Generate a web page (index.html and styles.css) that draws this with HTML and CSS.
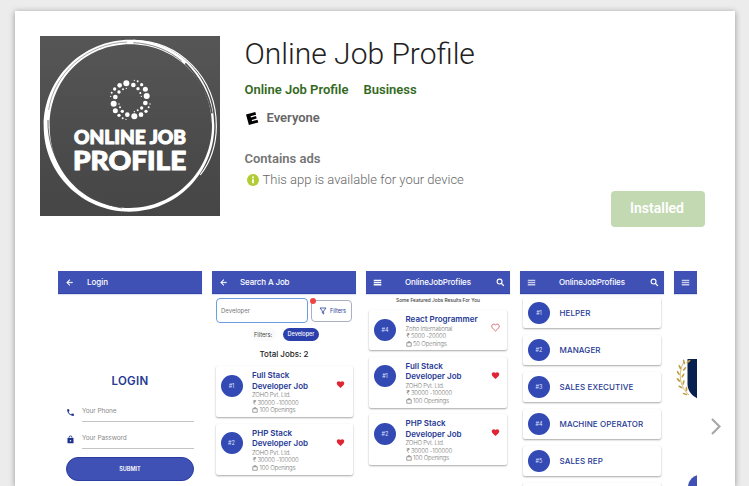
FILE: index.html
```html
<!DOCTYPE html>
<html lang="en">
<head>
<meta charset="utf-8">
<title>Online Job Profile</title>
<link rel="stylesheet" href="styles.css">
</head>
<body>
<svg class="defs" aria-hidden="true">
  <symbol id="back" viewBox="0 0 24 24"><path d="M20 11H7.8l5.6-5.6L12 4l-8 8 8 8 1.4-1.4L7.8 13H20z" stroke="#fff" stroke-width="1"/></symbol>
  <symbol id="menu" viewBox="0 0 24 24"><path d="M2 4.500h20v3.700H2zM2 10.200h20v3.700H2zM2 16h20v3.700H2z"/></symbol>
  <symbol id="search" viewBox="0 0 24 24"><circle cx="9.500" cy="9.500" r="6.500" fill="none" stroke="currentColor" stroke-width="3"/><path d="M14 14l7 7" stroke="currentColor" stroke-width="3.500"/></symbol>
  <symbol id="heart" viewBox="0 0 24 24"><path d="M12 21.350l-1.450-1.320C5.400 15.360 2 12.280 2 8.500 2 5.420 4.420 3 7.500 3c1.740 0 3.410.81 4.500 2.090C13.090 3.810 14.760 3 16.500 3 19.580 3 22 5.420 22 8.500c0 3.780-3.400 6.860-8.550 11.540z"/></symbol>
  <symbol id="bag" viewBox="0 0 24 24"><path d="M3 7h18v14H3zM8 7V3h8v4" fill="none" stroke="currentColor" stroke-width="2.400"/></symbol>
</svg>
<main class="page">
  <header class="app">
    <svg class="logo" viewBox="120 108 540 540">
      <defs><linearGradient id="bg" x1="0" y1="0" x2="0" y2="1"><stop offset="0" stop-color="#565656"/><stop offset=".6" stop-color="#4b4b4b"/><stop offset="1" stop-color="#464646"/></linearGradient></defs>
      <rect x="120" y="108" width="540" height="540" fill="url(#bg)"/>
      <path fill="#fff" fill-rule="evenodd" d="M391 119C248 119 131 234 131 378S247 635 388 635C530 635 643 520 643 376S534 119 391 119M390 133C527 133 636 240 636 376S526 624 389 624 149 515 149 378 253 133 390 133"/>
      <path d="M400 121C540 122 649 235 649 378c0 60-18 108-48 147" fill="none" stroke="#fff" stroke-width="3.500"/>
      <g fill="none" stroke="#4e4e4e"><path d="M144 360c-4 120 82 240 222 264" stroke-width="2.500"/><path d="M146 330c16-110 115-200 235-204" stroke-width="1.500"/><path d="M400 128c60 3 105 23 145 55" stroke-width="2"/><path d="M556 190c44 44 70 90 80 150" stroke-width="5"/></g>
      <g fill="#fff">
        <circle cx="379" cy="250" r="9"/><circle cx="359" cy="256" r="7"/><circle cx="344" cy="267" r="5"/><circle cx="335" cy="278" r="3"/><circle cx="332" cy="289" r="2"/>
        <circle cx="379" cy="265" r="2"/><circle cx="369" cy="268" r="3"/><circle cx="357" cy="276" r="5"/><circle cx="346" cy="291" r="7"/><circle cx="341" cy="311" r="9"/>
        <circle cx="346" cy="332" r="7.500"/><circle cx="357" cy="346" r="5"/><circle cx="368" cy="355" r="3"/><circle cx="378" cy="358" r="2"/><circle cx="357" cy="312" r="2"/><circle cx="360" cy="322" r="3"/><circle cx="367" cy="334" r="5"/><circle cx="382" cy="344" r="7"/><circle cx="403" cy="349" r="9"/><circle cx="423" cy="344" r="7"/><circle cx="438" cy="334" r="5"/><circle cx="446" cy="322" r="3"/><circle cx="450" cy="312" r="2"/>
        <circle cx="403" cy="335" r="2"/><circle cx="413" cy="331" r="3"/><circle cx="425" cy="324" r="5"/><circle cx="436" cy="309" r="7"/><circle cx="440" cy="288" r="9"/><circle cx="436" cy="268" r="7.500"/><circle cx="425" cy="254" r="5"/><circle cx="413" cy="244" r="3"/><circle cx="403" cy="241" r="2"/><circle cx="400" cy="255" r="7"/><circle cx="414" cy="266" r="5"/><circle cx="421" cy="279" r="3"/><circle cx="424" cy="289" r="2"/>
      </g>
      <g class="logo-text"><text x="222" y="433" font-size="54" textLength="336" lengthAdjust="spacingAndGlyphs">ONLINE JOB</text><text x="219" y="510" font-size="78" textLength="340" lengthAdjust="spacingAndGlyphs">PROFILE</text></g>
    </svg>
    <div class="info">
      <h1>Online Job Profile</h1>
      <div class="links"><a>Online Job Profile</a><a>Business</a></div>
      <div class="rating"><svg viewBox="0 0 14 16"><path d="M1 4.600L10.300 2l.8 2.700-5.500 1.500.4 1.300 5-1.400.7 2.400-5 1.400.4 1.300 5.400-1.500.8 2.700L3.900 15z"/></svg><span>Everyone</span></div>
      <div class="ads">Contains ads</div>
      <div class="device"><svg viewBox="0 0 12 12"><circle cx="6" cy="6" r="6" fill="#b2cc35"/><path d="M5.100 2.600h1.800v1.700H5.100zM5.100 5.300h1.800v4H5.100z" fill="#fff"/></svg><span>This app is available for your device</span></div>
    </div>
    <button class="installed">Installed</button>
  </header>

  <section class="gallery">
    <div class="strip">
      <article class="phone">
        <div class="bar"><svg><use href="#back"/></svg><b class="login-title">Login</b></div>
        <div class="login">
          <h2>LOGIN</h2>
          <label><svg viewBox="0 0 24 24"><path d="M6.620 10.790c1.440 2.830 3.760 5.140 6.590 6.590l2.200-2.200c.27-.27.67-.36 1.020-.24 1.120.37 2.330.57 3.570.57.55 0 1 .45 1 1V20c0 .55-.45 1-1 1C10.610 21 3 13.390 3 4c0-.55.45-1 1-1h3.500c.55 0 1 .45 1 1 0 1.250.2 2.450.57 3.570.11.35.03.74-.25 1.020z"/></svg><span>Your Phone</span></label>
          <label><svg viewBox="0 0 24 24"><path fill-rule="evenodd" d="M18 8h-1V6A5 5 0 0 0 7 6v2H4v14h16V8zM9 8V6a3 3 0 0 1 6 0v2zm3 5a2 2 0 1 1 0 4 2 2 0 0 1 0-4"/></svg><span>Your Password</span></label>
          <div class="submit">SUBMIT</div>
        </div>
      </article>

      <article class="phone">
        <div class="bar"><svg><use href="#back"/></svg><b class="search-title">Search A Job</b></div>
        <div class="find">
          <div class="query">Developer</div>
          <div class="filter"><i></i><svg viewBox="0 0 24 24"><path d="M3 3h18l-7 9v9l-4-3v-6z" fill="none" stroke="#33449f" stroke-width="2.500"/></svg>Filters</div>
        </div>
        <div class="chips"><span>Filters:</span><b>Developer</b></div>
        <div class="total">Total Jobs: 2</div>
        <div class="jobs">
          <div class="job"><i>#1</i><div><h3>Full Stack<br>Developer Job</h3><p>ZOHO Pvt. Ltd.</p><p class="pay">₹ 30000 -100000</p><p><svg><use href="#bag"/></svg>100 Openings</p></div><svg class="like"><use href="#heart"/></svg></div>
          <div class="job"><i>#2</i><div><h3>PHP Stack<br>Developer Job</h3><p>ZOHO Pvt. Ltd.</p><p class="pay">₹ 30000 -100000</p><p><svg><use href="#bag"/></svg>100 Openings</p></div><svg class="like"><use href="#heart"/></svg></div>
        </div>
      </article>

      <article class="phone">
        <div class="bar"><svg><use href="#menu"/></svg><b class="home-title">OnlineJobProfiles</b><svg class="end"><use href="#search"/></svg></div>
        <div class="featured">Some Featured Jobs Results For You</div>
        <div class="jobs home">
          <div class="job short"><i>#4</i><div><h3 class="react">React Programmer</h3><p>Zoho International</p><p class="pay">₹ 5000 -20000</p><p><svg><use href="#bag"/></svg>50 Openings</p></div><svg class="like outline"><use href="#heart"/></svg></div>
          <div class="job"><i>#1</i><div><h3>Full Stack<br>Developer Job</h3><p>ZOHO Pvt. Ltd.</p><p class="pay">₹ 30000 -100000</p><p><svg><use href="#bag"/></svg>100 Openings</p></div><svg class="like"><use href="#heart"/></svg></div>
          <div class="job"><i>#2</i><div><h3>PHP Stack<br>Developer Job</h3><p>ZOHO Pvt. Ltd.</p><p class="pay">₹ 30000 -100000</p><p><svg><use href="#bag"/></svg>100 Openings</p></div><svg class="like"><use href="#heart"/></svg></div>
        </div>
      </article>

      <article class="phone">
        <div class="bar"><svg class="dim"><use href="#menu"/></svg><b class="home-title">OnlineJobProfiles</b><svg class="end"><use href="#search"/></svg></div>
        <div class="roles">
          <div><i>#1</i><b>HELPER</b></div>
          <div><i>#2</i><b>MANAGER</b></div>
          <div><i>#3</i><b>SALES EXECUTIVE</b></div>
          <div><i>#4</i><b>MACHINE OPERATOR</b></div>
          <div><i>#5</i><b>SALES REP</b></div>
          <div></div>
        </div>
      </article>

      <article class="phone">
        <div class="bar"><svg class="dim"><use href="#menu"/></svg></div>
        <svg class="crest" viewBox="0 0 24 42">
          <path d="M12.500 1H24v40C16 38 12 32 12.500 24z" fill="#08204f"/><path d="M24 20v9c-2-2-2-6 0-9" fill="#03102e"/>
          <path d="M9 4C3 14 4 28 14 37" fill="none" stroke="#c0a044" stroke-width=".7"/>
          <g fill="#c0a044"><ellipse cx="9" cy="4" rx=".9" ry="2.500" transform="rotate(-18 9 4)"/><ellipse cx="13.500" cy="3.500" rx=".9" ry="2.500" transform="rotate(50 13.500 3.500)"/><ellipse cx="4.800" cy="9" rx=".9" ry="2.500" transform="rotate(-25 4.800 9)"/><ellipse cx="9.500" cy="11" rx=".9" ry="2.500" transform="rotate(40 9.500 11)"/><ellipse cx="3.300" cy="15" rx=".9" ry="2.500" transform="rotate(-30 3.300 15)"/><ellipse cx="8" cy="17.500" rx=".9" ry="2.500" transform="rotate(30 8 17.500)"/><ellipse cx="3.500" cy="22" rx=".9" ry="2.500" transform="rotate(-45 3.500 22)"/><ellipse cx="8.500" cy="24.500" rx=".9" ry="2.500" transform="rotate(15 8.500 24.500)"/><ellipse cx="5.500" cy="29" rx=".9" ry="2.500" transform="rotate(-60 5.500 29)"/><ellipse cx="11.500" cy="31" rx=".9" ry="2.500"/><ellipse cx="10" cy="36" rx=".9" ry="2.500" transform="rotate(-75 10 36)"/></g>
        </svg>
        <div class="bubble"></div>
      </article>
    </div>
    <svg class="next" viewBox="0 0 10 17"><path d="M1 1l7.500 7.500L1 16" fill="none" stroke="#a8a8a8" stroke-width="2.200"/></svg>
  </section>
</main>
</body>
</html>
```
FILE: styles.css
```css
* { box-sizing: border-box; }
html, body { height: 100%; }
body { margin: 0; background: #ececec; overflow: hidden; display: flow-root; font-family: Roboto, "Liberation Sans", sans-serif; }
h1, h2, h3, p { margin: 0; }
svg { display: block; flex: none; }
i { font-style: normal; }
.defs { width: 0; height: 0; position: absolute; }
.page { width: 720px; height: 475px; margin: 11px 0 0 15px; background: #fff; box-shadow: 0 1px 6px rgba(0,0,0,.38); display: flow-root; }
.app { display: flex; margin: 25px 30px 0 25px; height: 191px; }
.logo { width: 180px; height: 180px; }
.logo-text { fill: #fff; stroke: #fff; stroke-width: 3; stroke-linejoin: round; font-family: Lato, sans-serif; font-weight: 900; }
.info { margin-left: 24.500px; flex: 1; color: #666; font-size: 13px; line-height: 16px; white-space: nowrap; }
h1 { font-size: 30px; font-weight: 300; line-height: 36px; color: #212121; }
.links { display: flex; gap: 15px; margin-top: 10px; color: #33691e; font-weight: 600; }
.rating { display: flex; align-items: center; margin-top: 12px; font-weight: 600; }
.rating svg { width: 14px; height: 16px; margin-right: 8px; fill: #000; }
.ads { margin-top: 25px; font-weight: 600; color: #757575; }
.device { display: flex; align-items: center; margin: 5px 0 0 2px; color: #666; font-weight: 300; }
.device svg { width: 12px; height: 12px; margin-right: 4px; }
.installed { align-self: flex-end; width: 94px; height: 36px; padding: 0 2px 2px 0; border: 0; border-radius: 4px; background: #c3d9b1; color: #fff; font: 600 14px Roboto, sans-serif; }
.gallery { display: flex; margin: 44px 0 0 43px; height: 215px; }
.strip { display: flex; gap: 10px; width: 639px; height: 215px; overflow: hidden; font-family: Inter, "Open Sans", sans-serif; color: #263994; white-space: nowrap; }
.next { width: 10px; height: 17px; margin: 147px 0 0 14px; }
.phone { flex: none; width: 144px; }
.bar { display: flex; align-items: center; height: 23px; background: #3f51b5; border-bottom: 1px solid #3345aa; color: #fff; fill: #fff; font-size: 8px; padding: 0 5px 0 7px; box-shadow: 0 1px 1px #dde0f2; }
.bar svg { width: 9px; height: 9px; }
.bar b { font-weight: 500; }
.bar .end { margin-left: auto; }
.bar .dim { opacity: .7; }
.login-title { margin-left: 13px; }
.search-title { margin-left: 12px; letter-spacing: -.15px; }
.home-title { margin-left: 23px; letter-spacing: -.12px; }
.login { padding: 0 8px; }
h2 { margin-top: 79px; font-size: 11.500px; line-height: 16px; letter-spacing: .3px; text-align: center; font-weight: 600; }
label { display: flex; align-items: center; height: 27px; fill: #1c318f; font-size: 6.500px; letter-spacing: -.1px; color: #8a8a8a; }
label svg { width: 9px; height: 9px; margin-right: 7px; }
label span { flex: 1; height: 20px; line-height: 18px; padding-top: 0; margin-top: -1px; border-bottom: 1px solid #c4c4c4; }
h2 + label { margin-top: 10px; }
.submit { margin-top: 4px; height: 24px; border-radius: 12px; border: 1px solid #293da2; background: #3f51b5; color: #fff; font-size: 5.500px; line-height: 22px; font-weight: 600; text-align: center; }
.find { display: flex; justify-content: space-between; align-items: center; padding: 0 4px; margin-top: 4px; font-size: 6px; }
.query { width: 92px; height: 25px; line-height: 23px; padding-left: 4px; border: 1px solid #6a9fdd; border-radius: 4px; color: #777; }
.filter { position: relative; width: 41px; height: 22px; display: flex; align-items: center; padding-left: 7px; border: 1px solid #a9b0c4; border-radius: 4px; font-size: 5.500px; }
.filter svg { width: 8px; height: 8px; margin-right: 3px; }
.filter i { position: absolute; left: -2px; top: -3px; width: 6px; height: 6px; border-radius: 50%; background: #f04444; }
.chips { display: flex; gap: 7px; margin: 5px 0 0 39px; font-size: 5.700px; line-height: 13px; color: #444; }
.chips span { padding: 0 3px; background: #fafafa; border-radius: 6px; width: 25px; }
.chips b { width: 36px; text-align: center; border-radius: 7px; background: #2b40aa; color: #fff; font-weight: 500; font-size: 5.500px; }
.total { text-align: center; font-size: 8px; line-height: 10px; font-weight: 500; color: #222; margin-top: 8px; }
.jobs { display: flex; flex-direction: column; gap: 6.500px; margin: 7px 3.500px 0; }
.job { display: flex; height: 51px; padding: 4px 8px 0 5px; border-radius: 2px; box-shadow: 0 1px 2px rgba(0,0,0,.35); }
.job > i, .roles i { flex: none; width: 22px; height: 22px; border-radius: 50%; background: #3349b3; color: #dfe3ff; font-size: 5.500px; line-height: 22px; text-align: center; }
.job > i { margin: 4.500px 9.500px 0 0; }
h3 { font-size: 8px; line-height: 10.500px; font-weight: 600; }
.job p { display: flex; align-items: center; font-size: 6px; line-height: 7.700px; height: 7.700px; color: #777; font-weight: 300; letter-spacing: -.2px; }
.job p svg { width: 6px; height: 6px; margin-right: 1.500px; color: #666; }
.job .pay { padding-left: 1px; }
.like { width: 9px; height: 9px; fill: #df2634; margin: 10px 0 0 auto; }
.outline { fill: none; stroke: #d13c4a; stroke-width: 2; }
.featured { font-size: 4.800px; line-height: 8px; font-weight: 500; text-align: center; color: #444; margin-top: 2px; }
.home { margin: 6px 3px 0; }
.home .like { margin-right: -1px; }
.short { height: 40px; }
.short .like { margin-top: 9px; }
.roles { display: grid; grid-auto-rows: 30px; gap: 7px; margin: 4px 3px 0; }
.roles div { display: flex; align-items: center; padding-left: 5px; border-radius: 2px; box-shadow: 0 1px 2px rgba(0,0,0,.35); }
.roles b { margin-left: 9.500px; font-size: 8px; letter-spacing: .1px; font-weight: 500; }
.crest { width: 24px; height: 42px; margin: 64px 0 0 1px; }
.bubble { width: 24px; height: 24px; border-radius: 50%; background: #3f51b5; margin: 75px 0 0 14px; }
```
